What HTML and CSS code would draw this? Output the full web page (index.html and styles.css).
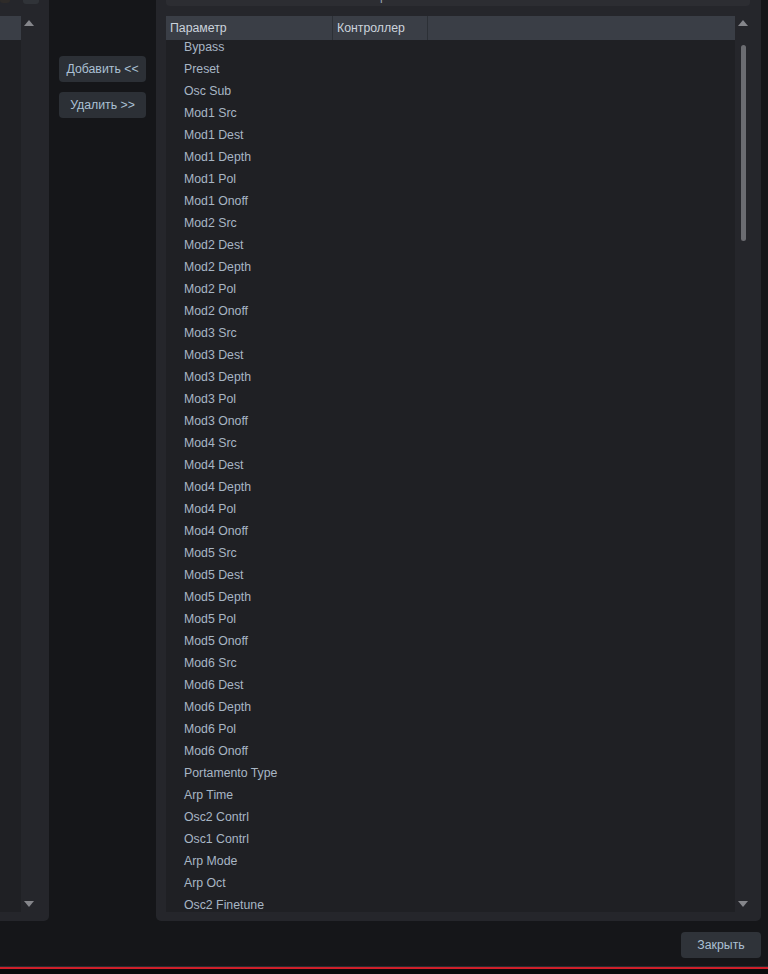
FILE: index.html
```html
<!DOCTYPE html>
<html lang="ru">
<head>
<meta charset="utf-8">
<title>Назначение контроллеров</title>
<link rel="stylesheet" href="styles.css">
</head>
<body>
<div class="app">
  <div class="main">
    <section class="panel panel-left">
      <div class="toolbar">
        <span class="tb-chip chip-brown"></span>
        <span class="tb-chip chip-gray"></span>
      </div>
      <div class="panel-body">
        <div class="list list-narrow">
          <div class="thead"></div>
        </div>
        <div class="vscroll">
          <span class="arrow arrow-up"></span>
          <span class="track"></span>
          <span class="arrow arrow-down"></span>
        </div>
      </div>
    </section>

    <div class="actions">
      <button class="btn btn-action">Добавить &lt;&lt;</button>
      <button class="btn btn-action">Удалить &gt;&gt;</button>
    </div>

    <section class="panel panel-right">
      <div class="toolbar">
        <div class="search"><span class="search-text">р</span></div>
      </div>
      <div class="panel-body">
        <div class="list list-wide">
          <div class="thead">
            <div class="th th-param">Параметр</div>
            <div class="th th-ctrl">Контроллер</div>
            <div class="th th-rest"></div>
          </div>
          <div class="tbody">
            <div class="rows">
              <div class="row">Bypass</div>
              <div class="row">Preset</div>
              <div class="row">Osc Sub</div>
              <div class="row">Mod1 Src</div>
              <div class="row">Mod1 Dest</div>
              <div class="row">Mod1 Depth</div>
              <div class="row">Mod1 Pol</div>
              <div class="row">Mod1 Onoff</div>
              <div class="row">Mod2 Src</div>
              <div class="row">Mod2 Dest</div>
              <div class="row">Mod2 Depth</div>
              <div class="row">Mod2 Pol</div>
              <div class="row">Mod2 Onoff</div>
              <div class="row">Mod3 Src</div>
              <div class="row">Mod3 Dest</div>
              <div class="row">Mod3 Depth</div>
              <div class="row">Mod3 Pol</div>
              <div class="row">Mod3 Onoff</div>
              <div class="row">Mod4 Src</div>
              <div class="row">Mod4 Dest</div>
              <div class="row">Mod4 Depth</div>
              <div class="row">Mod4 Pol</div>
              <div class="row">Mod4 Onoff</div>
              <div class="row">Mod5 Src</div>
              <div class="row">Mod5 Dest</div>
              <div class="row">Mod5 Depth</div>
              <div class="row">Mod5 Pol</div>
              <div class="row">Mod5 Onoff</div>
              <div class="row">Mod6 Src</div>
              <div class="row">Mod6 Dest</div>
              <div class="row">Mod6 Depth</div>
              <div class="row">Mod6 Pol</div>
              <div class="row">Mod6 Onoff</div>
              <div class="row">Portamento Type</div>
              <div class="row">Arp Time</div>
              <div class="row">Osc2 Contrl</div>
              <div class="row">Osc1 Contrl</div>
              <div class="row">Arp Mode</div>
              <div class="row">Arp Oct</div>
              <div class="row">Osc2 Finetune</div>
            </div>
          </div>
        </div>
        <div class="vscroll">
          <span class="arrow arrow-up"></span>
          <span class="track"><span class="thumb"></span></span>
          <span class="arrow arrow-down"></span>
        </div>
      </div>
    </section>
  </div>

  <footer class="footer">
    <button class="btn btn-close">Закрыть</button>
  </footer>
  <div class="statusline"></div>
</div>
</body>
</html>
```

FILE: styles.css
```css
* { box-sizing: border-box; }

html, body {
  margin: 0;
  padding: 0;
  background: #151619;
  font-family: "Liberation Sans", Arial, sans-serif;
  font-size: 12.3px;
  overflow: hidden;
}

.app {
  display: flex;
  flex-direction: column;
  width: 768px;
  height: 974px;
}

.main {
  display: flex;
  height: 921px;
  flex: none;
}

.panel {
  display: flex;
  flex-direction: column;
  background: #25262b;
}

.panel-left {
  width: 49px;
  border-radius: 0 0 5px 0;
}

.panel-right {
  width: 605px;
  padding-left: 10px;
  border-radius: 0 0 5px 5px;
}

.toolbar {
  height: 16px;
  flex: none;
  display: flex;
  align-items: flex-start;
}

.tb-chip {
  display: block;
  height: 4px;
  border-radius: 0 0 3px 3px;
}

.chip-brown {
  width: 10px;
  height: 3px;
  background: #2e2b29;
}

.chip-gray {
  width: 16px;
  margin-left: 13px;
  background: #303338;
}

.search {
  width: 584px;
  height: 6px;
  background: #2c2d32;
  border-radius: 0 0 4px 4px;
  overflow: hidden;
  position: relative;
}

.search-text {
  position: absolute;
  left: 214px;
  top: -11px;
  color: #9aa6b3;
  font-size: 12px;
  line-height: 14px;
}

.panel-body {
  flex: 1;
  display: flex;
  padding-bottom: 9px;
  min-height: 0;
}

.panel-left .panel-body { padding-right: 12px; }
.panel-right .panel-body { padding-right: 10px; }

.list {
  display: flex;
  flex-direction: column;
  background: #1f2024;
  min-height: 0;
}

.list-narrow { width: 21px; }
.list-wide { width: 569px; }

.thead {
  height: 24px;
  flex: none;
  display: flex;
  background: #3a3e46;
}

.th {
  color: #cbd3dc;
  line-height: 24px;
  padding-left: 4px;
  border-right: 1px solid #2c3036;
  white-space: nowrap;
}

.th-param { width: 167px; }
.th-ctrl { width: 95px; }
.th-rest { flex: 1; border-right: none; }

.tbody {
  flex: 1;
  overflow: hidden;
  min-height: 0;
}

.rows {
  margin-top: -4px;
}

.row {
  height: 22px;
  line-height: 22px;
  padding-left: 18px;
  color: #a8b6c4;
  white-space: nowrap;
}

.vscroll {
  width: 16px;
  flex: none;
  display: flex;
  flex-direction: column;
  align-items: center;
}

.arrow {
  display: block;
  width: 0;
  height: 0;
  border-left: 5px solid transparent;
  border-right: 5px solid transparent;
  flex: none;
}

.arrow-up {
  margin-top: 4px;
  border-bottom: 6px solid #85868b;
}

.arrow-down {
  margin-bottom: 5px;
  border-top: 6px solid #85868b;
}

.track {
  flex: 1;
  display: flex;
  flex-direction: column;
  align-items: center;
  padding-top: 19px;
}

.thumb {
  display: block;
  width: 5px;
  height: 196px;
  background: #6b6c71;
  border-radius: 3px;
}

.actions {
  width: 107px;
  flex: none;
  display: flex;
  flex-direction: column;
  gap: 10px;
  padding: 56px 0 0 10px;
}

.btn {
  font-family: "Liberation Sans", Arial, sans-serif;
  font-size: 12.3px;
  color: #abc0d4;
  background: #2c3036;
  border: none;
  border-radius: 4px;
  height: 26px;
  padding: 0;
  cursor: pointer;
}

.btn-action { width: 87px; }

.footer {
  height: 45px;
  flex: none;
  display: flex;
  justify-content: flex-end;
  align-items: flex-start;
  padding: 11px 7px 0 0;
}

.btn-close {
  width: 80px;
  background: #2f3339;
}

.statusline {
  height: 8px;
  flex: none;
  border-top: 1px solid #2a2b2f;
  background: #0b0b0c;
}

.statusline::before {
  content: "";
  display: block;
  height: 2px;
  background: #cf1f2a;
}
```
